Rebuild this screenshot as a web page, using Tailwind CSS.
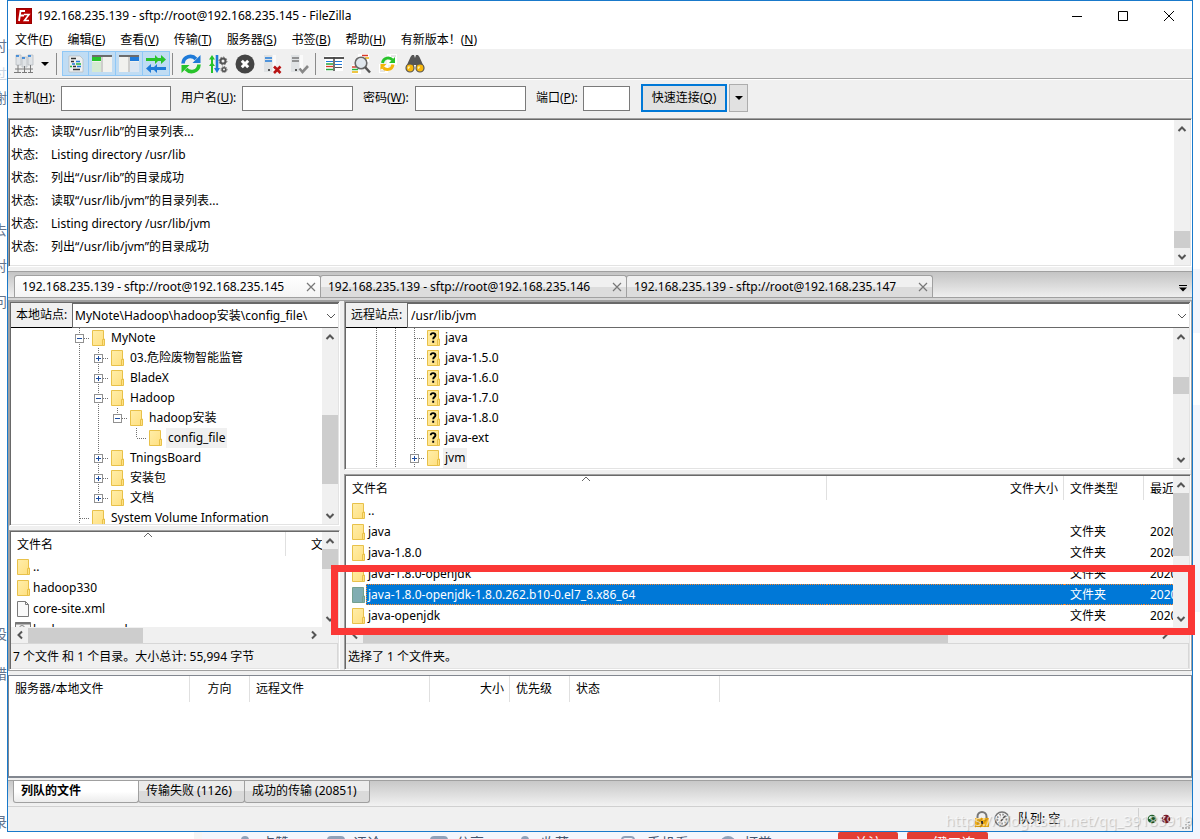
<!DOCTYPE html>
<html lang="zh-CN">
<head>
<meta charset="utf-8">
<title>192.168.235.139 - sftp://root@192.168.235.145 - FileZilla</title>
<script src="https://cdn.jsdelivr.net/npm/@tailwindcss/browser@4"></script>
</head>
<body class="flex h-screen flex-col overflow-hidden bg-white font-['Noto_Sans','Noto_Sans_CJK_SC',sans-serif] text-xs leading-5 text-black">

<!-- Shared icon symbols -->
<svg width="0" height="0" class="absolute">
  <defs>
    <linearGradient id="fg" x1="0" y1="0" x2="1" y2="1"><stop offset="0" stop-color="#ffeeaa"/><stop offset="1" stop-color="#ffdf7e"/></linearGradient>
    <symbol id="folder" viewBox="0 0 14 16"><path d="M.5.5h11v8.500h1v6.500H.5z" fill="url(#fg)" stroke="#e8c14a"/><path d="M10.500 15v-5.500h2" fill="none" stroke="#e8c14a"/></symbol>
    <symbol id="folderq" viewBox="0 0 14 16"><path d="M.5.5h11v8.500h1v6.500H.5z" fill="url(#fg)" stroke="#e8c14a"/><path d="M10.500 15v-5.500h2" fill="none" stroke="#e8c14a"/><path d="M3.700 5.300c.2-3 5-2.800 4.700 0C8.200 7.200 6.300 7 6.200 9.300M6.200 10.800v2" fill="none" stroke="#000" stroke-width="1.900"/></symbol>
    <symbol id="foldersel" viewBox="0 0 14 16"><path d="M.5.500h11v8.500h1v6.500H.5z" fill="#80adb2" stroke="#74a08f"/><path d="M10.500 15v-5.500h2" fill="none" stroke="#74a08f"/></symbol>
    <symbol id="file" viewBox="0 0 14 16"><path d="M.5.5h8l3 3v12H.5z" fill="#fafafa" stroke="#7a7a7a"/><path d="M8.500.5v3h3" fill="none" stroke="#7a7a7a"/></symbol>
    <symbol id="cmd" viewBox="0 0 16 16"><path d="M.5.500h15v14H.5z" fill="#f4f4f4" stroke="#777"/><path d="M0 1.500h16" stroke="#777" stroke-width="2"/><circle cx="7" cy="6" r="2.500" fill="none" stroke="#888"/></symbol>
    <symbol id="t-v" viewBox="0 0 19 20"><path d="M9.500 0v20" stroke="#707070" stroke-dasharray="1 1"/></symbol>
    <symbol id="t-tee" viewBox="0 0 19 20"><path d="M9.500 0v20M10 10.500h9" stroke="#707070" stroke-dasharray="1 1"/></symbol>
    <symbol id="t-end" viewBox="0 0 19 20"><path d="M9.500 0v10M10 10.500h9" stroke="#707070" stroke-dasharray="1 1"/></symbol>
    <symbol id="t-minus" viewBox="0 0 19 20"><path d="M9.500 0v20M14 10.500h5" stroke="#707070" stroke-dasharray="1 1"/><rect x="5.500" y="6.500" width="8" height="8" fill="#fff" stroke="#919191"/><path d="M7 10.500h5" stroke="#1c4da0"/></symbol>
    <symbol id="t-minus-end" viewBox="0 0 19 20"><path d="M9.500 0v6M14 10.500h5" stroke="#707070" stroke-dasharray="1 1"/><rect x="5.500" y="6.500" width="8" height="8" fill="#fff" stroke="#919191"/><path d="M7 10.500h5" stroke="#1c4da0"/></symbol>
    <symbol id="t-plus" viewBox="0 0 19 20"><path d="M9.500 0v20M14 10.500h5" stroke="#707070" stroke-dasharray="1 1"/><rect x="5.500" y="6.500" width="8" height="8" fill="#fff" stroke="#919191"/><path d="M7 10.500h5M9.500 8v5" stroke="#1c4da0"/></symbol>
    <symbol id="t-plus-end" viewBox="0 0 19 20"><path d="M9.500 0v6M14 10.500h5" stroke="#707070" stroke-dasharray="1 1"/><rect x="5.500" y="6.500" width="8" height="8" fill="#fff" stroke="#919191"/><path d="M7 10.500h5M9.500 8v5" stroke="#1c4da0"/></symbol>
    <symbol id="up" viewBox="0 0 10 10"><path d="M1.500 7L5 3.500 8.500 7" fill="none" stroke="#555" stroke-width="2"/></symbol>
    <symbol id="down" viewBox="0 0 10 10"><path d="M1.500 3L5 6.500 8.500 3" fill="none" stroke="#555" stroke-width="2"/></symbol>
    <symbol id="left" viewBox="0 0 10 10"><path d="M7 1.500L3.500 5 7 8.500" fill="none" stroke="#555" stroke-width="2"/></symbol>
    <symbol id="right" viewBox="0 0 10 10"><path d="M3 1.500L6.500 5 3 8.500" fill="none" stroke="#555" stroke-width="2"/></symbol>
    <symbol id="thin-down" viewBox="0 0 10 10"><path d="M1 3l4 4 4-4" fill="none" stroke="#555"/></symbol>
    <symbol id="thin-up" viewBox="0 0 10 6"><path d="M1 5l4-4 4 4" fill="none" stroke="#666"/></symbol>
    <symbol id="x" viewBox="0 0 10 10"><path d="M1 1l8 8M9 1L1 9" stroke="#777" stroke-width="1.200"/></symbol>
    <symbol id="caret" viewBox="0 0 8 4"><path d="M0 0h8L4 4z" fill="#000"/></symbol>
  </defs>
</svg>

<div class="flex min-h-0 flex-1">
  <!-- Page behind the window, left edge -->
  <div class="flex w-[7px] shrink-0 flex-col items-end overflow-hidden pt-9 text-sm text-slate-500" aria-hidden="true">
    <span>讨</span><span class="mt-2 text-slate-300">过</span><span class="mt-1">谢</span>
    <span class="mt-28">去</span><span class="mt-4">对</span><span class="mt-4">问</span>
    <span class="mt-60">，</span><span class="mt-4">，</span><span class="mt-4">设</span><span class="mt-5">错</span><span class="mt-auto">录</span>
  </div>

  <!-- Application window -->
  <main class="flex min-w-0 flex-1 flex-col border border-[#1979ca] bg-[#f0f0f0]">
    <header class="flex h-[30px] shrink-0 items-center bg-white pl-2">
      <svg class="mr-[5px] size-4" viewBox="0 0 16 16"><rect width="16" height="16" fill="#b80000"/><rect x=".5" y=".5" width="15" height="15" fill="none" stroke="#7d0000" stroke-dasharray="1 1"/><path d="M3 13L4.500 3H9M4 7.500h4" fill="none" stroke="#fff" stroke-width="1.800"/><path d="M8 6.500h5L8.500 12.500H13" fill="none" stroke="#fff" stroke-width="1.600"/></svg>
      <h1 class="flex-1">192.168.235.139 - sftp://root@192.168.235.145 - FileZilla</h1>
      <button class="flex h-full w-[46px] items-center justify-center" aria-label="最小化"><svg class="size-3" viewBox="0 0 12 12"><path d="M1 6.500h10" stroke="#000"/></svg></button>
      <button class="flex h-full w-[46px] items-center justify-center" aria-label="最大化"><svg class="size-3" viewBox="0 0 12 12"><path d="M1.500 1.500h9v9h-9z" fill="none" stroke="#000"/></svg></button>
      <button class="flex h-full w-[46px] items-center justify-center" aria-label="关闭"><svg class="size-3" viewBox="0 0 12 12"><path d="M1 1l10 10M11 1L1 11" stroke="#000"/></svg></button>
    </header>

    <nav class="flex h-[18px] shrink-0 items-center gap-[15px] bg-white pl-[7px]">
      <button>文件(<u>F</u>)</button><button>编辑(<u>E</u>)</button><button>查看(<u>V</u>)</button><button>传输(<u>T</u>)</button><button>服务器(<u>S</u>)</button><button>书签(<u>B</u>)</button><button>帮助(<u>H</u>)</button><button>有新版本！(<u>N</u>)</button>
    </nav>

    <div class="flex h-[30px] shrink-0 items-center border-b border-[#a0a0a0] pl-[6px]">
      <button aria-label="站点管理器"><svg class="size-5" viewBox="0 0 20 20"><path d="M2 1h5v10H2zM8 3h5v10H8zM14 1h5v10h-5z" fill="#e0e3e6" stroke="#b8bdc2" stroke-width=".8"/><path d="M2 2h3M8 4h3M14 2h3" stroke="#1f7ad8" stroke-width="1.500"/><path d="M4 11v4M10.500 12v3M16.500 11v4M1 15h18M4 15v4M10.500 15v4M16.500 15v4M0 18.500h7M8 18.500h5M14 18.500h5" stroke="#7a7a7a"/></svg></button>
      <button class="ml-[7px] mr-[7px]" aria-label="站点列表"><svg class="h-1 w-2"><use href="#caret"/></svg></button>
      <span class="h-[22px] w-px bg-[#8a8a8a]"></span>
      <div class="ml-[5px] flex">
        <button class="flex h-[25px] w-[27px] items-center justify-center border border-[#90c8f6] bg-[#c0dcf3]" aria-label="消息日志"><svg class="size-[18px]" viewBox="0 0 18 18"><path d="M2 1h11l3 3v13H2z" fill="#eef0f1" stroke="#b5b9bc" stroke-width=".7"/><path d="M4 3.500h5M4 6.500h3M6 11.500h3M6 14.500h7" stroke="#333" stroke-width="1.300"/><path d="M9 6.500h4M5 9h3M10 11.500h4" stroke="#1f7ad8" stroke-width="1.600"/><path d="M9 9h5M3 11.500h2" stroke="#27b53c" stroke-width="1.600"/></svg></button>
        <button class="-ml-px flex h-[25px] w-7 items-center justify-center border border-[#90c8f6] bg-[#c0dcf3]" aria-label="本地目录树"><svg class="size-5" viewBox="0 0 20 20"><path d="M0 2h20v16H0z" fill="#f1f1ee"/><path d="M0 1h20v2H0z" fill="#6b6b6b"/><path d="M0 3h9v4H0z" fill="#27c32b"/><path d="M0 8h9v10H0z" fill="#d5ead2"/><path d="M10 3v15" stroke="#aaa"/></svg></button>
        <button class="-ml-px flex h-[25px] w-7 items-center justify-center border border-[#90c8f6] bg-[#c0dcf3]" aria-label="远程目录树"><svg class="size-5" viewBox="0 0 20 20"><path d="M0 2h20v16H0z" fill="#f1f1ee"/><path d="M0 1h20v2H0z" fill="#6b6b6b"/><path d="M11 3h9v4h-9z" fill="#1f7ad8"/><path d="M11 8h9v10h-9z" fill="#dbe6f2"/><path d="M10 3v15" stroke="#aaa"/></svg></button>
        <button class="-ml-px flex h-[25px] w-7 items-center justify-center border border-[#90c8f6] bg-[#c0dcf3]" aria-label="传输队列"><svg class="size-5" viewBox="0 0 20 20"><path d="M0 4h9V1l3 3h3V1l5 4.500L15 10V7h-3l-3 3V7H0z" fill="#27c32b"/><path d="M20 13h-9v-3l-3 3H5v-3l-5 4.500L5 19v-3h3l3 3v-3h9z" fill="#1f7ad8"/></svg></button>
      </div>
      <span class="ml-[2px] h-[22px] w-px bg-[#8a8a8a]"></span>
      <div class="ml-[8px] flex gap-[7px]">
        <button aria-label="刷新"><svg class="size-5" viewBox="0 0 20 20"><path d="M2 9.500C2.500 2 11 .5 15 5" fill="none" stroke="#1f7ad8" stroke-width="3.600"/><path d="M19.500 1v8h-8z" fill="#1f7ad8"/><path d="M18 10.500C17.500 18 9 19.500 5 15" fill="none" stroke="#27c32b" stroke-width="3.600"/><path d="M.5 19v-8h8z" fill="#27c32b"/></svg></button>
        <button aria-label="处理队列"><svg class="size-5" viewBox="0 0 20 20"><path d="M4 19V4" stroke="#27c32b" stroke-width="2"/><path d="M1 5.500L4 1l3 4.500zM1 12l3-4 3 4z" fill="#27c32b"/><path d="M9 1v15" stroke="#1f7ad8" stroke-width="2.600"/><path d="M6 14l3 5 3-5z" fill="#1f7ad8"/><circle cx="15" cy="7" r="2.500" fill="none" stroke="#555" stroke-width="2"/><circle cx="15" cy="7" r="3.900" fill="none" stroke="#555" stroke-dasharray="1.500 1.500"/><circle cx="16" cy="15.500" r="1.800" fill="none" stroke="#555" stroke-width="1.600"/><circle cx="16" cy="15.500" r="3" fill="none" stroke="#555" stroke-dasharray="1 1"/></svg></button>
        <button aria-label="取消"><svg class="size-5" viewBox="0 0 20 20"><circle cx="10" cy="10" r="9.500" fill="#444"/><path d="M6.800 6.800l6.400 6.400M13.200 6.800l-6.400 6.400" stroke="#fff" stroke-width="3"/></svg></button>
        <button aria-label="断开"><svg class="size-5" viewBox="0 0 20 20"><path d="M2 1h11v17H2z" fill="#dfe2e4"/><path d="M10.500 1H14v17h-3.500z" fill="#fafafa"/><path d="M3 4h7M3 7h7" stroke="#1f7ad8" stroke-width="1.400"/><path d="M6 16h2" stroke="#555" stroke-width="2"/><path d="M12 12.500l6.500 6.500M18.500 12.500L12 19" stroke="#b81414" stroke-width="2.600"/></svg></button>
        <button aria-label="重新连接"><svg class="size-5" viewBox="0 0 20 20"><path d="M2 1h11v17H2z" fill="#dfe2e4"/><path d="M10.500 1H14v17h-3.500z" fill="#fafafa"/><path d="M3 4h7M3 7h7" stroke="#777" stroke-width="1.400"/><path d="M6 16h2" stroke="#555" stroke-width="2"/><path d="M10.500 14.500l3 3.500 5.500-6" fill="none" stroke="#888" stroke-width="2.600"/></svg></button>
      </div>
      <span class="ml-[6px] h-[22px] w-px bg-[#8a8a8a]"></span>
      <div class="ml-[8px] flex gap-[7px]">
        <button aria-label="过滤"><svg class="size-5" viewBox="0 0 20 20"><path d="M1 2h18v15H1z" fill="#fff"/><path d="M0 3h20v2H0z" fill="#555"/><path d="M2 7.500h7" stroke="#1f7ad8"/><path d="M2 10h7M2 15.500h7" stroke="#27a53c" stroke-width="1.500"/><path d="M2 12.500h7" stroke="#d83b2a" stroke-width="1.300"/><path d="M11 7.500h7M11 10.500h7" stroke="#1f7ad8"/><path d="M11 13.500h7" stroke="#555"/><path d="M10 3v14" stroke="#444" stroke-width="1.500"/></svg></button>
        <button aria-label="目录比较"><svg class="size-5" viewBox="0 0 20 20"><path d="M7 0h11v8H7zM1 11h9v9H1z" fill="#fff"/><path d="M11 1.500h6" stroke="#d83b2a" stroke-width="1.500"/><path d="M14 4h4" stroke="#eab308" stroke-width="1.500"/><path d="M1 13h4" stroke="#d83b2a" stroke-width="1.500"/><path d="M1 15.500h6" stroke="#27b53c" stroke-width="1.500"/><path d="M1 18h6" stroke="#eab308" stroke-width="1.500"/><circle cx="10" cy="9" r="5.800" fill="#dfe6ec" stroke="#666" stroke-width="1.600"/><path d="M14 13l5 5.500" stroke="#555" stroke-width="2.500"/></svg></button>
        <button aria-label="同步浏览"><svg class="size-5" viewBox="0 0 20 20"><path d="M9 0h10v11H9zM1 10h9v9H1z" fill="#fff"/><path d="M13 2h5M2 14h3M2 17h5" stroke="#ccc"/><path d="M4.500 9c1-6 7.500-6 10-3" fill="none" stroke="#27c32b" stroke-width="3"/><path d="M17 3v6h-6z" fill="#27c32b"/><path d="M15 10.500c-1 6-7.500 6-10 3" fill="none" stroke="#f5b50a" stroke-width="3"/><path d="M2.500 16v-6h6z" fill="#f5b50a"/></svg></button>
        <button aria-label="查找"><svg class="size-5" viewBox="0 0 20 20"><path d="M5.500 3L7 1h2l1 3 1-3h2l1.500 2L19 13h-7l-1-2H9l-1 2H1z" fill="#555"/><circle cx="5" cy="14" r="4" fill="#f8b80e" stroke="#555" stroke-width="1.200"/><circle cx="15" cy="14" r="4" fill="#f8b80e" stroke="#555" stroke-width="1.200"/><path d="M3 14.500l1.500-2M13 14.500l1.500-2" stroke="#fff3b0" stroke-width="1.500"/></svg></button>
      </div>
    </div>

    <form class="flex h-[39px] shrink-0 items-center border-t border-white pb-[2px] pl-1" onsubmit="return false">
      <label for="host" class="w-[49px]">主机(<u>H</u>):</label><input id="host" class="mr-[10px] h-[25px] w-[110px] border border-[#7a7a7a] bg-white px-1">
      <label for="user" class="w-[61px]">用户名(<u>U</u>):</label><input id="user" class="mr-[10px] h-[25px] w-[111px] border border-[#7a7a7a] bg-white px-1">
      <label for="pass" class="w-[52px]">密码(<u>W</u>):</label><input id="pass" type="password" class="mr-[10px] h-[25px] w-[111px] border border-[#7a7a7a] bg-white px-1">
      <label for="port" class="w-[47px]">端口(<u>P</u>):</label><input id="port" class="mr-[11px] h-[25px] w-[47px] border border-[#7a7a7a] bg-white px-1">
      <button class="h-7 w-[86px] whitespace-nowrap border-2 border-[#0078d7] bg-[#e1e1e1]">快速连接(<u>Q</u>)</button>
      <button class="ml-[2px] flex h-7 w-[19px] items-center justify-center border border-[#adadad] bg-[#e1e1e1]" aria-label="连接历史"><svg class="h-1 w-2"><use href="#caret"/></svg></button>
    </form>

    <!-- Message log -->
    <section class="flex h-[149px] shrink-0 border border-b-white border-l-[#a0a0a0] border-r-white border-t-[#a0a0a0] bg-white p-px shadow-[inset_1px_1px_0_#696969,inset_-1px_-1px_0_#e3e3e3]">
      <dl class="grid flex-1 auto-rows-[23px] grid-cols-[40px_1fr] content-start items-center pl-px">
        <dt>状态:</dt><dd>读取“/usr/lib”的目录列表...</dd>
        <dt>状态:</dt><dd>Listing directory /usr/lib</dd>
        <dt>状态:</dt><dd>列出“/usr/lib”的目录成功</dd>
        <dt>状态:</dt><dd>读取“/usr/lib/jvm”的目录列表...</dd>
        <dt>状态:</dt><dd>Listing directory /usr/lib/jvm</dd>
        <dt>状态:</dt><dd>列出“/usr/lib/jvm”的目录成功</dd>
      </dl>
      <div class="flex w-4 flex-col bg-[#f0f0f0]">
        <button class="flex h-[17px] items-center justify-center" aria-label="向上"><svg class="size-[10px]"><use href="#up"/></svg></button>
        <div class="mt-[94px] h-[17px] bg-[#cdcdcd]"></div>
        <button class="mt-auto flex h-[17px] items-center justify-center" aria-label="向下"><svg class="size-[10px]"><use href="#down"/></svg></button>
      </div>
    </section>

    <!-- Connection tabs -->
    <div class="mt-1 flex h-[27px] shrink-0 items-end border-y border-[#a0a0a0] bg-linear-to-b from-[#c4c4c4] to-[#efefef] pl-[6px]">
      <div class="flex h-[22px] w-[307px] items-center rounded-t-[3px] border border-b-0 border-[#a0a0a0] bg-linear-to-b from-white to-[#f4f4f4] pl-[7px] pr-1"><button class="flex-1 text-left">192.168.235.139 - sftp://root@192.168.235.145</button><button aria-label="关闭标签"><svg class="size-[10px]"><use href="#x"/></svg></button></div>
      <div class="-ml-px flex h-[22px] w-[307px] items-center rounded-t-[3px] border border-b-0 border-[#a0a0a0] bg-linear-to-b from-[#f0f0f0] from-50% to-[#dcdcdc] to-50% pl-[7px] pr-1"><button class="flex-1 text-left">192.168.235.139 - sftp://root@192.168.235.146</button><button aria-label="关闭标签"><svg class="size-[10px]"><use href="#x"/></svg></button></div>
      <div class="-ml-px flex h-[22px] w-[307px] items-center rounded-t-[3px] border border-b-0 border-[#a0a0a0] bg-linear-to-b from-[#f0f0f0] from-50% to-[#dcdcdc] to-50% pl-[7px] pr-1"><button class="flex-1 text-left">192.168.235.139 - sftp://root@192.168.235.147</button><button aria-label="关闭标签"><svg class="size-[10px]"><use href="#x"/></svg></button></div>
      <button class="mb-[5px] ml-auto mr-[5px]" aria-label="标签列表"><svg class="h-[7px] w-2" viewBox="0 0 8 7"><path d="M0 .5h8" stroke="#000"/><path d="M0 2.500h8l-4 4z"/></svg></button>
    </div>
    <div class="h-[3px] shrink-0 border-b border-[#a0a0a0] bg-[#d6d6d6]"></div>

    <!-- Local and remote panes -->
    <div class="flex min-h-0 flex-1 border-x border-[#a0a0a0]">
      <section class="flex w-[331px] shrink-0 flex-col gap-1">
        <div class="flex h-[225px] shrink-0 flex-col border border-b-white border-l-[#a0a0a0] border-r-white border-t-[#a0a0a0] bg-white p-px shadow-[inset_1px_1px_0_#696969,inset_-1px_-1px_0_#e3e3e3]">
          <div class="flex h-[25px] shrink-0">
            <label for="lpath" class="flex w-[61px] items-center border-b border-black bg-[#f0f0f0] pl-[5px]">本地站点:</label>
            <div class="relative flex-1 border border-r-0 border-[#696969] bg-white">
              <select id="lpath" class="h-full w-full appearance-none pl-[2px] pr-4"><option>MyNote\Hadoop\hadoop安装\config_file\</option></select>
              <svg class="pointer-events-none absolute right-[2px] top-[7px] size-[10px]"><use href="#thin-down"/></svg>
            </div>
          </div>
          <div class="flex min-h-0 flex-1">
            <ul class="flex-1 overflow-hidden pl-[59px]">
              <li class="flex h-5 items-center"><svg class="h-5 w-[19px]"><use href="#t-minus"/></svg><svg class="ml-[3px] h-4 w-[14px]"><use href="#folder"/></svg><span class="ml-[3px] px-[2px]">MyNote</span></li>
              <li class="flex h-5 items-center"><svg class="h-5 w-[19px]"><use href="#t-v"/></svg><svg class="h-5 w-[19px]"><use href="#t-plus"/></svg><svg class="ml-[3px] h-4 w-[14px]"><use href="#folder"/></svg><span class="ml-[3px] px-[2px]">03.危险废物智能监管</span></li>
              <li class="flex h-5 items-center"><svg class="h-5 w-[19px]"><use href="#t-v"/></svg><svg class="h-5 w-[19px]"><use href="#t-plus"/></svg><svg class="ml-[3px] h-4 w-[14px]"><use href="#folder"/></svg><span class="ml-[3px] px-[2px]">BladeX</span></li>
              <li class="flex h-5 items-center"><svg class="h-5 w-[19px]"><use href="#t-v"/></svg><svg class="h-5 w-[19px]"><use href="#t-minus"/></svg><svg class="ml-[3px] h-4 w-[14px]"><use href="#folder"/></svg><span class="ml-[3px] px-[2px]">Hadoop</span></li>
              <li class="flex h-5 items-center"><svg class="h-5 w-[19px]"><use href="#t-v"/></svg><svg class="h-5 w-[19px]"><use href="#t-v"/></svg><svg class="h-5 w-[19px]"><use href="#t-minus-end"/></svg><svg class="ml-[3px] h-4 w-[14px]"><use href="#folder"/></svg><span class="ml-[3px] px-[2px]">hadoop安装</span></li>
              <li class="flex h-5 items-center"><svg class="h-5 w-[19px]"><use href="#t-v"/></svg><svg class="h-5 w-[19px]"><use href="#t-v"/></svg><span class="w-[19px]"></span><svg class="h-5 w-[19px]"><use href="#t-end"/></svg><svg class="ml-[3px] h-4 w-[14px]"><use href="#folder"/></svg><span class="ml-[3px] bg-[#f0f0f0] px-[2px]">config_file</span></li>
              <li class="flex h-5 items-center"><svg class="h-5 w-[19px]"><use href="#t-v"/></svg><svg class="h-5 w-[19px]"><use href="#t-plus"/></svg><svg class="ml-[3px] h-4 w-[14px]"><use href="#folder"/></svg><span class="ml-[3px] px-[2px]">TningsBoard</span></li>
              <li class="flex h-5 items-center"><svg class="h-5 w-[19px]"><use href="#t-v"/></svg><svg class="h-5 w-[19px]"><use href="#t-plus"/></svg><svg class="ml-[3px] h-4 w-[14px]"><use href="#folder"/></svg><span class="ml-[3px] px-[2px]">安装包</span></li>
              <li class="flex h-5 items-center"><svg class="h-5 w-[19px]"><use href="#t-v"/></svg><svg class="h-5 w-[19px]"><use href="#t-plus-end"/></svg><svg class="ml-[3px] h-4 w-[14px]"><use href="#folder"/></svg><span class="ml-[3px] px-[2px]">文档</span></li>
              <li class="flex h-5 items-center"><svg class="h-5 w-[19px]"><use href="#t-tee"/></svg><svg class="ml-[3px] h-4 w-[14px]"><use href="#folder"/></svg><span class="ml-[3px] px-[2px]">System Volume Information</span></li>
            </ul>
            <div class="flex w-4 flex-col bg-[#f0f0f0]">
              <button class="flex h-[17px] items-center justify-center" aria-label="向上"><svg class="size-[10px]"><use href="#up"/></svg></button>
              <div class="mt-[70px] h-[69px] bg-[#cdcdcd]"></div>
              <button class="mt-auto flex h-[17px] items-center justify-center" aria-label="向下"><svg class="size-[10px]"><use href="#down"/></svg></button>
            </div>
          </div>
        </div>

        <div class="flex min-h-0 flex-1 flex-col border border-b-white border-l-[#a0a0a0] border-r-white border-t-[#a0a0a0] bg-[#f0f0f0] p-px shadow-[inset_1px_1px_0_#696969,inset_-1px_-1px_0_#e3e3e3]">
          <div class="flex min-h-0 flex-1 bg-white">
            <div class="flex-1 overflow-hidden">
              <table class="w-full table-fixed border-separate border-spacing-0 whitespace-nowrap">
                <colgroup><col class="w-[275px]"><col></colgroup>
                <thead><tr class="h-6"><th class="relative border-r border-[#e0e0e0] p-0 pl-[6px] pt-px text-left font-normal">文件名<svg class="absolute left-[132px] top-0 h-[6px] w-[10px]"><use href="#thin-up"/></svg></th><th class="overflow-hidden p-0 pl-[25px] pt-px text-left font-normal">文件大小</th></tr></thead>
                <tbody>
                  <tr class="h-[21px]"><td class="p-0 pl-[6px]"><div class="flex items-center gap-[2px]"><svg class="h-4 w-[14px]"><use href="#folder"/></svg>..</div></td><td></td></tr>
                  <tr class="h-[21px]"><td class="p-0 pl-[6px]"><div class="flex items-center gap-[2px]"><svg class="h-4 w-[14px]"><use href="#folder"/></svg>hadoop330</div></td><td></td></tr>
                  <tr class="h-[21px]"><td class="p-0 pl-[6px]"><div class="flex items-center gap-[2px]"><svg class="h-4 w-[14px]"><use href="#file"/></svg>core-site.xml</div></td><td></td></tr>
                  <tr class="h-[21px]"><td class="p-0 pl-1"><div class="flex items-center gap-[2px]"><svg class="size-4"><use href="#cmd"/></svg>hadoop-env.cmd</div></td><td></td></tr>
                </tbody>
              </table>
            </div>
            <div class="flex w-4 flex-col bg-[#f0f0f0]">
              <button class="flex h-[17px] items-center justify-center" aria-label="向上"><svg class="size-[10px]"><use href="#up"/></svg></button>
              <div class="h-5 bg-[#cdcdcd]"></div>
              <button class="mt-auto flex h-[17px] items-center justify-center" aria-label="向下"><svg class="size-[10px]"><use href="#down"/></svg></button>
            </div>
          </div>
          <div class="flex h-4 shrink-0 items-center pr-4">
            <button class="flex w-[17px] justify-center" aria-label="向左"><svg class="size-[10px]"><use href="#left"/></svg></button>
            <div class="h-[15px] w-[115px] bg-[#cdcdcd]"></div>
            <button class="ml-auto flex w-[17px] justify-center" aria-label="向右"><svg class="size-[10px]"><use href="#right"/></svg></button>
          </div>
          <p class="flex h-[25px] shrink-0 items-center border-r border-t border-[#d7d7d7] pl-[2px] pt-px">7 个文件 和 1 个目录。大小总计: 55,994 字节</p>
        </div>
      </section>

      <section class="ml-1 flex min-w-0 flex-1 flex-col gap-1">
        <div class="flex h-[169px] shrink-0 flex-col border border-b-white border-l-[#a0a0a0] border-r-white border-t-[#a0a0a0] bg-white p-px shadow-[inset_1px_1px_0_#696969,inset_-1px_-1px_0_#e3e3e3]">
          <div class="flex h-[25px] shrink-0">
            <label for="rpath" class="flex w-[61px] items-center border-b border-black bg-[#f0f0f0] pl-[5px]">远程站点:</label>
            <div class="relative flex-1 border border-r-0 border-[#696969] bg-white">
              <select id="rpath" class="h-full w-full appearance-none pl-[3px] pr-4"><option>/usr/lib/jvm</option></select>
              <svg class="pointer-events-none absolute right-[2px] top-[7px] size-[10px]"><use href="#thin-down"/></svg>
            </div>
          </div>
          <div class="flex min-h-0 flex-1">
            <ul class="flex-1 overflow-hidden pl-[21px]">
              <li class="flex h-5 items-center"><svg class="h-5 w-[19px]"><use href="#t-v"/></svg><svg class="h-5 w-[19px]"><use href="#t-v"/></svg><svg class="h-5 w-[19px]"><use href="#t-tee"/></svg><svg class="ml-[3px] h-4 w-[14px]"><use href="#folderq"/></svg><span class="ml-[2px] px-[2px]">java</span></li>
              <li class="flex h-5 items-center"><svg class="h-5 w-[19px]"><use href="#t-v"/></svg><svg class="h-5 w-[19px]"><use href="#t-v"/></svg><svg class="h-5 w-[19px]"><use href="#t-tee"/></svg><svg class="ml-[3px] h-4 w-[14px]"><use href="#folderq"/></svg><span class="ml-[2px] px-[2px]">java-1.5.0</span></li>
              <li class="flex h-5 items-center"><svg class="h-5 w-[19px]"><use href="#t-v"/></svg><svg class="h-5 w-[19px]"><use href="#t-v"/></svg><svg class="h-5 w-[19px]"><use href="#t-tee"/></svg><svg class="ml-[3px] h-4 w-[14px]"><use href="#folderq"/></svg><span class="ml-[2px] px-[2px]">java-1.6.0</span></li>
              <li class="flex h-5 items-center"><svg class="h-5 w-[19px]"><use href="#t-v"/></svg><svg class="h-5 w-[19px]"><use href="#t-v"/></svg><svg class="h-5 w-[19px]"><use href="#t-tee"/></svg><svg class="ml-[3px] h-4 w-[14px]"><use href="#folderq"/></svg><span class="ml-[2px] px-[2px]">java-1.7.0</span></li>
              <li class="flex h-5 items-center"><svg class="h-5 w-[19px]"><use href="#t-v"/></svg><svg class="h-5 w-[19px]"><use href="#t-v"/></svg><svg class="h-5 w-[19px]"><use href="#t-tee"/></svg><svg class="ml-[3px] h-4 w-[14px]"><use href="#folderq"/></svg><span class="ml-[2px] px-[2px]">java-1.8.0</span></li>
              <li class="flex h-5 items-center"><svg class="h-5 w-[19px]"><use href="#t-v"/></svg><svg class="h-5 w-[19px]"><use href="#t-v"/></svg><svg class="h-5 w-[19px]"><use href="#t-tee"/></svg><svg class="ml-[3px] h-4 w-[14px]"><use href="#folderq"/></svg><span class="ml-[2px] px-[2px]">java-ext</span></li>
              <li class="flex h-5 items-center"><svg class="h-5 w-[19px]"><use href="#t-v"/></svg><svg class="h-5 w-[19px]"><use href="#t-v"/></svg><svg class="h-5 w-[19px]"><use href="#t-plus"/></svg><svg class="ml-[3px] h-4 w-[14px]"><use href="#folder"/></svg><span class="ml-[2px] bg-[#f0f0f0] px-[2px]">jvm</span></li>
            </ul>
            <div class="flex w-4 flex-col bg-[#f0f0f0]">
              <button class="flex h-[17px] items-center justify-center" aria-label="向上"><svg class="size-[10px]"><use href="#up"/></svg></button>
              <div class="mt-8 h-[17px] bg-[#cdcdcd]"></div>
              <button class="mt-auto flex h-[17px] items-center justify-center" aria-label="向下"><svg class="size-[10px]"><use href="#down"/></svg></button>
            </div>
          </div>
        </div>

        <div class="relative flex min-h-0 flex-1 flex-col border border-b-white border-l-[#a0a0a0] border-r-white border-t-[#a0a0a0] bg-[#f0f0f0] p-px shadow-[inset_1px_1px_0_#696969,inset_-1px_-1px_0_#e3e3e3]">
          <div class="flex min-h-0 flex-1 bg-white">
            <div class="flex-1 overflow-hidden">
              <table class="w-full table-fixed border-separate border-spacing-0 whitespace-nowrap">
                <colgroup><col><col class="w-[237px]"><col class="w-20"><col class="w-[29px]"></colgroup>
                <thead><tr class="h-6"><th class="relative border-r border-[#e0e0e0] p-0 pl-[6px] pt-px text-left font-normal">文件名<svg class="absolute left-[49%] top-0 h-[6px] w-[10px]"><use href="#thin-up"/></svg></th><th class="border-r border-[#e0e0e0] p-0 pr-[5px] pt-px text-right font-normal">文件大小</th><th class="border-r border-[#e0e0e0] p-0 pl-[6px] pt-px text-left font-normal">文件类型</th><th class="overflow-hidden p-0 pl-[6px] pt-px text-left font-normal">最近修改</th></tr></thead>
                <tbody>
                  <tr class="h-[21px]"><td class="p-0 pl-[6px]"><div class="flex items-center gap-[2px]"><svg class="h-4 w-[14px]"><use href="#folder"/></svg>..</div></td><td></td><td></td><td></td></tr>
                  <tr class="h-[21px]"><td class="p-0 pl-[6px]"><div class="flex items-center gap-[2px]"><svg class="h-4 w-[14px]"><use href="#folder"/></svg>java</div></td><td></td><td class="p-0 pl-[6px]">文件夹</td><td class="overflow-hidden p-0 pl-[6px]">2020</td></tr>
                  <tr class="h-[21px]"><td class="p-0 pl-[6px]"><div class="flex items-center gap-[2px]"><svg class="h-4 w-[14px]"><use href="#folder"/></svg>java-1.8.0</div></td><td></td><td class="p-0 pl-[6px]">文件夹</td><td class="overflow-hidden p-0 pl-[6px]">2020</td></tr>
                  <tr class="h-[21px]"><td class="p-0 pl-[6px]"><div class="flex items-center gap-[2px]"><svg class="h-4 w-[14px]"><use href="#folder"/></svg>java-1.8.0-openjdk</div></td><td></td><td class="p-0 pl-[6px]">文件夹</td><td class="overflow-hidden p-0 pl-[6px]">2020</td></tr>
                  <tr class="h-[21px] leading-[19px] text-white"><td class="p-0 pl-[6px]"><div class="flex items-center"><svg class="h-4 w-[14px]"><use href="#foldersel"/></svg><span class="h-[21px] flex-1 border-y border-l border-dotted border-[#ff8728] bg-[#0078d7] pl-px">java-1.8.0-openjdk-1.8.0.262.b10-0.el7_8.x86_64</span></div></td><td class="border-y border-dotted border-[#ff8728] bg-[#0078d7] p-0"></td><td class="border-y border-dotted border-[#ff8728] bg-[#0078d7] p-0 pl-[6px]">文件夹</td><td class="overflow-hidden border-y border-dotted border-[#ff8728] bg-[#0078d7] p-0 pl-[6px]">2020</td></tr>
                  <tr class="h-[21px]"><td class="p-0 pl-[6px]"><div class="flex items-center gap-[2px]"><svg class="h-4 w-[14px]"><use href="#folder"/></svg>java-openjdk</div></td><td></td><td class="p-0 pl-[6px]">文件夹</td><td class="overflow-hidden p-0 pl-[6px]">2020</td></tr>
                </tbody>
              </table>
            </div>
            <div class="flex w-4 flex-col bg-[#f0f0f0]">
              <button class="flex h-[17px] items-center justify-center" aria-label="向上"><svg class="size-[10px]"><use href="#up"/></svg></button>
              <div class="h-[63px] bg-[#cdcdcd]"></div>
              <button class="mt-auto flex h-[17px] items-center justify-center" aria-label="向下"><svg class="size-[10px]"><use href="#down"/></svg></button>
            </div>
          </div>
          <div class="flex h-4 shrink-0 items-center pr-4">
            <button class="flex w-[17px] justify-center" aria-label="向左"><svg class="size-[10px]"><use href="#left"/></svg></button>
            <div class="h-[15px] w-[585px] bg-[#cdcdcd]"></div>
            <button class="ml-auto flex w-[17px] justify-center" aria-label="向右"><svg class="size-[10px]"><use href="#right"/></svg></button>
          </div>
          <p class="flex h-[25px] shrink-0 items-center border-r border-t border-[#d7d7d7] pl-[2px] pt-px">选择了 1 个文件夹。</p>
          <!-- Highlight frame around the selected folder -->
          <div class="pointer-events-none absolute -left-[14px] -right-[5px] bottom-[34px] z-10 h-[70px] border-[7px] border-[#fb3836]"></div>
        </div>
      </section>
    </div>

    <!-- Transfer queue -->
    <div class="h-[5px] shrink-0 border-t border-[#a0a0a0]"></div>
    <section class="h-[103px] shrink-0 overflow-hidden border border-b-2 border-[#828790] bg-white">
      <table class="w-full table-fixed border-separate border-spacing-0 whitespace-nowrap">
        <colgroup><col class="w-[181px]"><col class="w-[60px]"><col class="w-[180px]"><col class="w-20"><col class="w-[60px]"><col class="w-[150px]"><col></colgroup>
        <thead><tr class="h-[26px]"><th class="border-r border-[#e0e0e0] p-0 pl-[6px] text-left font-normal">服务器/本地文件</th><th class="border-r border-[#e0e0e0] p-0 text-center font-normal">方向</th><th class="border-r border-[#e0e0e0] p-0 pl-[6px] text-left font-normal">远程文件</th><th class="border-r border-[#e0e0e0] p-0 pr-[5px] text-right font-normal">大小</th><th class="border-r border-[#e0e0e0] p-0 pl-[6px] text-left font-normal">优先级</th><th class="border-r border-[#e0e0e0] p-0 pl-[6px] text-left font-normal">状态</th><th></th></tr></thead>
      </table>
    </section>
    <div class="mt-[2px] flex h-[27px] shrink-0 items-start border-b border-t border-b-[#d0d0d0] border-t-[#a0a0a0] bg-linear-to-b from-[#c8c8c8] to-[#f2f2f2] pl-[5px]">
      <button class="h-[22px] w-[126px] rounded-b-[3px] border border-t-0 border-[#a0a0a0] bg-linear-to-b from-white from-50% to-[#ececec] pb-[3px] pl-[7px] text-left font-bold">列队的文件</button>
      <button class="-ml-px h-[22px] w-[107px] rounded-b-[3px] border border-t-0 border-[#a0a0a0] bg-linear-to-b from-[#ececec] from-50% to-[#dadada] to-50% pb-[3px] pl-[7px] text-left">传输失败 (1126)</button>
      <button class="-ml-px h-[22px] w-[126px] rounded-b-[3px] border border-t-0 border-[#a0a0a0] bg-linear-to-b from-[#ececec] from-50% to-[#dadada] to-50% pb-[3px] pl-[7px] text-left">成功的传输 (20851)</button>
    </div>
    <footer class="relative flex h-6 shrink-0 items-center justify-end pr-px">
      <svg class="h-[17px] w-4" viewBox="0 0 16 17"><path d="M3.500 8V5.500a4.500 4.500 0 019 0V8" fill="none" stroke="#777" stroke-width="2"/><path d="M1 7h14v9H1z" fill="#f3b51c"/><path d="M1 16l7-9M6 16l8-9" stroke="#d99a10" stroke-width="1.500"/><path d="M8 10v3" stroke="#333" stroke-width="2"/></svg>
      <svg class="ml-1 size-4" viewBox="0 0 16 16"><circle cx="8" cy="8" r="7" fill="#f6f6f6" stroke="#777" stroke-width="1.500"/><circle cx="8" cy="8" r="4.500" fill="none" stroke="#888" stroke-dasharray="1.500 1.500" stroke-width="2"/><path d="M7 10l4-5" stroke="#555" stroke-width="1.500"/></svg>
      <span class="ml-2 w-[120px]">队列: 空</span>
      <span class="h-[22px] w-px bg-[#d0d0d0]"></span>
      <svg class="ml-2 size-[10px]" viewBox="0 0 10 10"><circle cx="5" cy="5" r="4.300" fill="#1d5b27"/><path d="M2.500 5a2.500 2.500 0 012-2.500" stroke="#d5efd8" stroke-width="1.500" fill="none"/></svg>
      <svg class="ml-1 size-[10px]" viewBox="0 0 10 10"><circle cx="5" cy="5" r="4.300" fill="#761722"/><path d="M2.500 5a2.500 2.500 0 012-2.500" stroke="#f0cfd3" stroke-width="1.500" fill="none"/></svg>
      <svg class="ml-[10px] mt-3 size-[10px]" viewBox="0 0 10 10"><path d="M7 1h2v2H7zM7 4h2v2H7zM4 4h2v2H4zM7 7h2v2H7zM4 7h2v2H4zM1 7h2v2H1z" fill="#b5b5b5"/></svg>
      <span class="pointer-events-none absolute right-0 top-px whitespace-nowrap text-[15px] leading-6 text-white/60 [text-shadow:1px_1px_1px_#00000033]">https://blog.csdn.net/qq_39185919</span>
    </footer>
  </main>

  <!-- Page behind the window, right edge -->
  <div class="flex w-[7px] shrink-0 flex-col"><div class="h-[269px]"></div><div class="h-16 bg-[#f3f6fd]"></div><div class="h-[72px]"></div><div class="h-[207px] bg-[#f3f6fd]"></div><div class="h-[158px]"></div><div class="flex-1 bg-[#f3f6fd]"></div></div>
</div>

<!-- Page behind the window, bottom edge -->
<div class="flex h-[7px] shrink-0 items-start overflow-hidden bg-[#f3f6fd] text-sm leading-none text-slate-600" aria-hidden="true">
  <div class="h-full w-[194px] bg-white"></div>
  <div class="h-full w-2 bg-[#f5f5f5]"></div>
  <div class="flex pl-[34px] pt-[4px]">
    <span class="flex w-[91px] gap-2"><i class="ml-[5px] mr-1 size-2 shrink-0 rounded-t-full bg-slate-400"></i>点赞</span>
    <span class="flex w-[103px] gap-2"><i class="h-4 w-[18px] shrink-0 rounded-t bg-slate-400"></i>评论</span>
    <span class="flex w-[86px] gap-2"><i class="h-4 w-[18px] shrink-0 rounded-t bg-slate-400"></i>分享</span>
    <span class="flex w-[105px] gap-2"><i class="ml-[5px] mr-1 size-2 shrink-0 rounded-t-full bg-slate-400"></i>收藏</span>
    <span class="flex w-[99px] gap-3 whitespace-nowrap"><i class="h-4 w-[14px] shrink-0 rounded-t border-2 border-slate-400"></i>手机看</span>
    <span class="flex w-[60px] gap-2"><i class="size-4 shrink-0 rounded-t-full bg-slate-400"></i>打赏</span>
  </div>
  <div class="ml-auto mr-[212px] flex h-full gap-[9px] text-white"><span class="w-[60px] rounded-t-[2px] bg-[#e33e33] pt-1 text-center">关注</span><span class="w-[81px] rounded-t-[2px] bg-[#e33e33] pt-1 text-center">一键三连</span></div>
</div>
</body>
</html>
